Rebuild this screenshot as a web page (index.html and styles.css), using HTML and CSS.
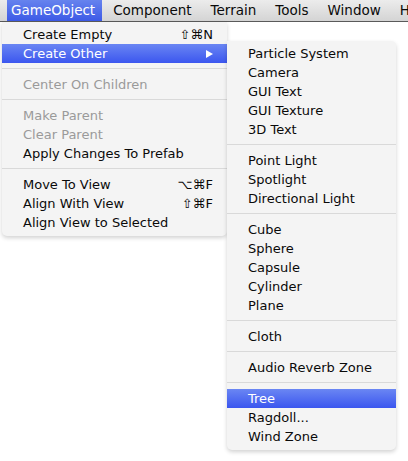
FILE: index.html
```html
<!DOCTYPE html>
<html>
<head>
<meta charset="utf-8">
<link rel="stylesheet" href="styles.css">
</head>
<body>
<div class="menubar">
  <div class="mb-item active">GameObject</div>
  <div class="mb-item">Component</div>
  <div class="mb-item">Terrain</div>
  <div class="mb-item">Tools</div>
  <div class="mb-item">Window</div>
  <div class="mb-item">Help</div>
</div>
<div class="area">
  <div class="menu main">
    <div class="row"><span>Create Empty</span><span class="sc">⇧⌘N</span></div>
    <div class="row hi"><span>Create Other</span><span class="arrow"></span></div>
    <div class="sep"></div>
    <div class="row dis"><span>Center On Children</span></div>
    <div class="sep"></div>
    <div class="row dis"><span>Make Parent</span></div>
    <div class="row dis"><span>Clear Parent</span></div>
    <div class="row"><span>Apply Changes To Prefab</span></div>
    <div class="sep"></div>
    <div class="row"><span>Move To View</span><span class="sc">⌥⌘F</span></div>
    <div class="row"><span>Align With View</span><span class="sc">⇧⌘F</span></div>
    <div class="row"><span>Align View to Selected</span></div>
  </div>
  <div class="menu sub">
    <div class="row"><span>Particle System</span></div>
    <div class="row"><span>Camera</span></div>
    <div class="row"><span>GUI Text</span></div>
    <div class="row"><span>GUI Texture</span></div>
    <div class="row"><span>3D Text</span></div>
    <div class="sep"></div>
    <div class="row"><span>Point Light</span></div>
    <div class="row"><span>Spotlight</span></div>
    <div class="row"><span>Directional Light</span></div>
    <div class="sep"></div>
    <div class="row"><span>Cube</span></div>
    <div class="row"><span>Sphere</span></div>
    <div class="row"><span>Capsule</span></div>
    <div class="row"><span>Cylinder</span></div>
    <div class="row"><span>Plane</span></div>
    <div class="sep"></div>
    <div class="row"><span>Cloth</span></div>
    <div class="sep"></div>
    <div class="row"><span>Audio Reverb Zone</span></div>
    <div class="sep"></div>
    <div class="row hi"><span>Tree</span></div>
    <div class="row"><span>Ragdoll...</span></div>
    <div class="row"><span>Wind Zone</span></div>
  </div>
</div>
</body>
</html>
```

FILE: styles.css
```css
html, body {
  margin: 0;
  padding: 0;
  background: #ffffff;
  width: 408px;
  height: 461px;
  overflow: hidden;
  font-family: "DejaVu Sans", "Liberation Sans", sans-serif;
  color: #0a0a0a;
}
.menubar {
  display: flex;
  height: 21px;
  border-bottom: 1px solid #5a5a5a;
  background: linear-gradient(#ececec, #d4d4d4);
  padding-left: 7px;
  white-space: nowrap;
  overflow: hidden;
}
.mb-item {
  font-size: 13.5px;
  line-height: 21px;
  padding: 0 9.5px;
  flex: none;
}
.mb-item.active {
  padding: 0 7px 0 4px;
  margin-right: 1.5px;
  color: #ffffff;
  background: linear-gradient(#6683ee, #3d5ae6);
}
.area {
  display: flex;
  align-items: flex-start;
}
.menu {
  background: #f4f4f4;
  font-size: 13px;
  box-shadow: 0 2px 4px rgba(0,0,0,0.18);
}
.main {
  width: 225px;
  margin-left: 2px;
  padding: 3px 0 4px;
  border-radius: 0 0 5px 5px;
}
.sub {
  width: 169px;
  margin-top: 19px;
  padding: 3px 0 4px;
  border-radius: 0 5px 5px 5px;
}
.row {
  display: flex;
  justify-content: space-between;
  align-items: center;
  height: 19px;
  line-height: 19px;
  padding: 0 14px 0 21px;
  white-space: nowrap;
}
.row.hi {
  color: #ffffff;
  background: linear-gradient(#6a86f3, #3b56ef);
}
.row.dis {
  color: #9a9a9a;
}
.sc {
  font-size: 13px;
}
.arrow {
  width: 0;
  height: 0;
  border-top: 4px solid transparent;
  border-bottom: 4px solid transparent;
  border-left: 7px solid #ffffff;
}
.sep {
  height: 1px;
  background: #d9d9d9;
  margin: 5px 0 6px;
}
```
